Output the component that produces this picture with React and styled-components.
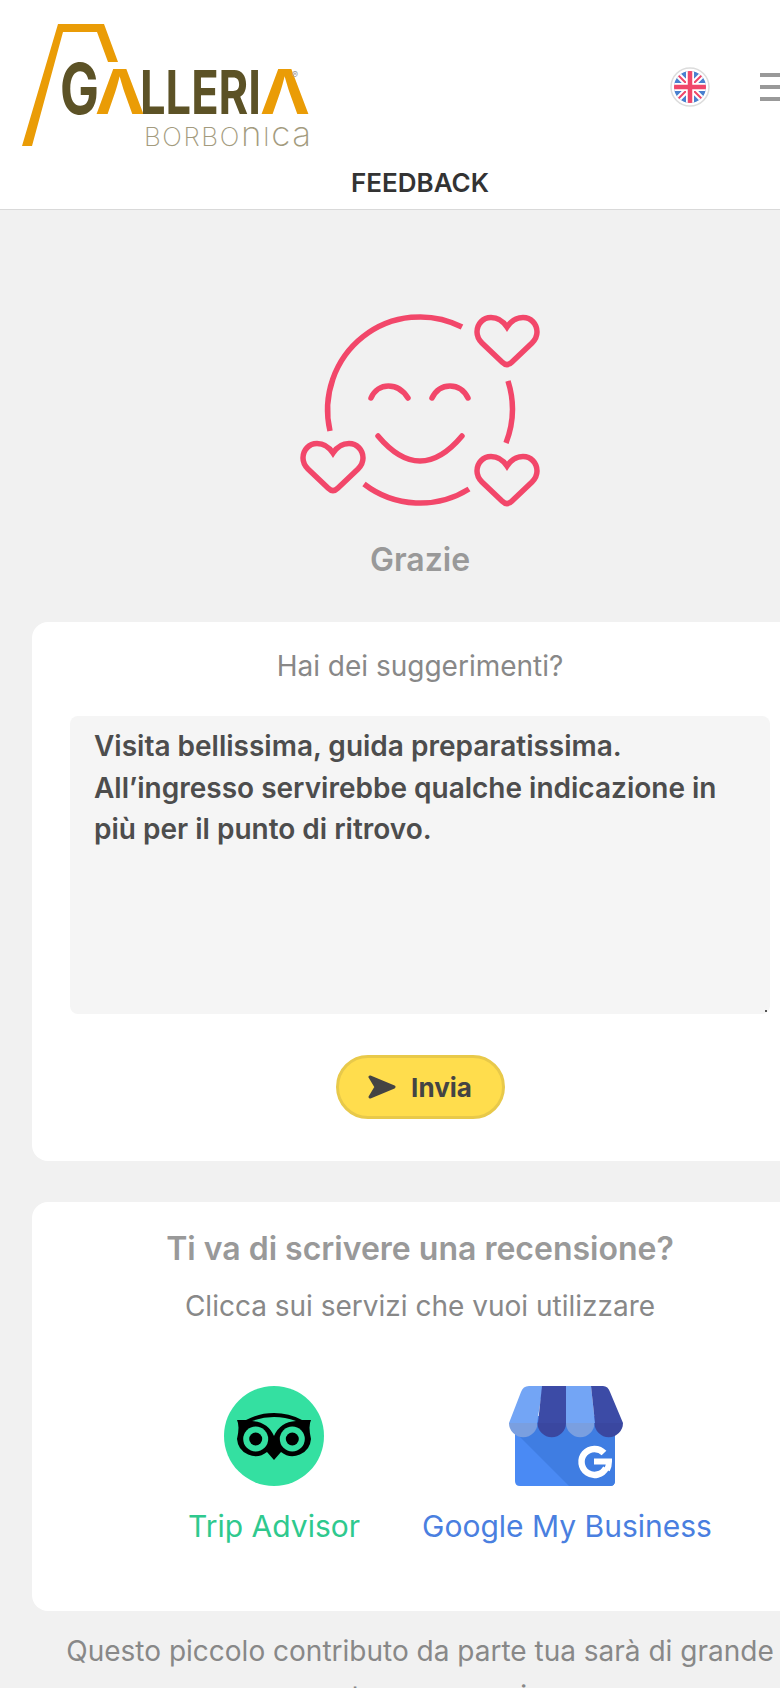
import React from 'react';
import styled, { createGlobalStyle } from 'styled-components';

const GlobalStyle = createGlobalStyle`
	html, body {
		margin: 0;
		width: 780px;
		height: 1688px;
		overflow: hidden;
		background: #f1f1f1;
		font-family: Inter, 'Noto Sans', sans-serif;
	}
`;

const Page = styled.div`
	width: 840px;
	display: flex;
	flex-direction: column;
`;

const Header = styled.header`
	height: 210px;
	box-sizing: border-box;
	background: #fff;
	border-bottom: 1px solid #d9d9d9;
	display: flex;
	flex-direction: column;
`;

const TopRow = styled.div`
	display: flex;
	align-items: center;
	justify-content: space-between;
	padding: 20px 40px 0 20px;
`;

const Actions = styled.div`
	display: flex;
	align-items: center;
	gap: 50px;
	margin-bottom: 16px;
`;

const Burger = styled.div`
	width: 40px;
	display: flex;
	flex-direction: column;
	gap: 8px;

	span {
		height: 4px;
		background: #999;
	}
`;

const PageTitle = styled.h1`
	margin: -2px 0 0;
	text-align: center;
	font-size: 26px;
	line-height: 30px;
	font-weight: 600;
	color: #333;
`;

const Main = styled.main`
	display: flex;
	flex-direction: column;
	padding: 0 32px;
`;

const Hero = styled.section`
	display: flex;
	flex-direction: column;
	align-items: center;
	padding-top: 80px;
	height: 412px;
	box-sizing: border-box;
`;

const HeroText = styled.div`
	font-size: 32px;
	line-height: 36px;
	font-weight: 600;
	color: #999;
	margin-top: 26px;
`;

const Card = styled.section`
	background: #fff;
	border-radius: 16px;
	display: flex;
	flex-direction: column;
	align-items: center;
	height: ${({ h }) => h}px;
	box-sizing: border-box;
	padding-top: ${({ top }) => top}px;

	& + & {
		margin-top: 41px;
	}
`;

const Question = styled.div`
	font-size: 28px;
	line-height: 36px;
	color: #888;
`;

const Heading = styled.h2`
	margin: 0 0 21px;
	font-size: 32px;
	line-height: 36px;
	font-weight: 600;
	color: #999;
`;

const NoteBox = styled.div`
	position: relative;
	align-self: flex-start;
	margin: 32px 0 0 38px;

	&::after {
		content: '';
		position: absolute;
		right: 3px;
		bottom: 2px;
		width: 2px;
		height: 2px;
		background: #555;
	}
`;

const Note = styled.textarea`
	display: block;
	width: 700px;
	height: 298px;
	box-sizing: border-box;
	padding: 10px 24px;
	border: 0;
	outline: 0;
	resize: none;
	border-radius: 8px;
	background: #f5f5f5;
	color: #4d4d4d;
	font: 600 28px/41.5px Inter, sans-serif;
`;

const SendButton = styled.button`
	margin-top: 41px;
	width: 169px;
	height: 64px;
	box-sizing: border-box;
	border: 3px solid #e8c94a;
	border-radius: 32px;
	background: #ffdd4d;
	color: #444;
	display: flex;
	align-items: center;
	justify-content: center;
	gap: 15px;
	font: 700 26px Inter, sans-serif;
`;

const Services = styled.div`
	display: flex;
	justify-content: center;
	gap: 62px;
	margin: 62px 0 0 60px;
`;

const Service = styled.a`
	display: flex;
	flex-direction: column;
	align-items: center;
	gap: 22px;
	font-size: 30px;
	line-height: 36px;
	color: ${({ color }) => color};
`;

const Closing = styled.p`
	margin: 18px 0 0;
	text-align: center;
	font-size: 28px;
	line-height: 45px;
	color: #888;
`;

const LogoName = styled.text`
	font-family: Inter, sans-serif;
	font-weight: 700;
`;

const LogoPlace = styled.text`
	font-family: Inter, sans-serif;
	font-weight: 250;
	letter-spacing: 1.6px;
	fill: #a39b7e;
`;

const Logo = () => (
	<svg width="330" height="150" viewBox="20 20 330 150">
		<path d="M22 146 L58 24 H104 L118 62 H108 L97 32 H63 L32 146Z" fill="#ea9c06" />
		<LogoName>
			<tspan x="60" y="114" fontSize="70" fill="#5c5226" textLength="39" lengthAdjust="spacingAndGlyphs">G</tspan>
			<tspan x="95" y="114" fontSize="62" fill="#ea9c06" textLength="50" lengthAdjust="spacingAndGlyphs">Λ</tspan>
			<tspan x="140" y="114" fontSize="60" fill="#5c5226" textLength="121" lengthAdjust="spacingAndGlyphs">LLERI</tspan>
			<tspan x="260" y="114" fontSize="62" fill="#ea9c06" textLength="50" lengthAdjust="spacingAndGlyphs">Λ</tspan>
			<tspan x="292" y="78" fontSize="9" fill="#999" fontWeight="400">®</tspan>
		</LogoName>
		<LogoPlace x="144" y="146" fontSize="26">
			BORBO<tspan fontSize="35">n</tspan>I<tspan fontSize="35">ca</tspan>
		</LogoPlace>
	</svg>
);

const Flag = () => (
	<svg width="40" height="40" viewBox="0 0 40 40">
		<defs>
			<clipPath id="flagClip">
				<circle cx="20" cy="20" r="16" />
			</clipPath>
		</defs>
		<circle cx="20" cy="20" r="19" fill="#fff" stroke="#dcdcdc" strokeWidth="1.5" />
		<g clipPath="url(#flagClip)">
			<rect width="40" height="40" fill="#4a80cf" />
			<path d="M4 4 L36 36 M36 4 L4 36" stroke="#fff" strokeWidth="6" />
			<path d="M4 4 L36 36 M36 4 L4 36" stroke="#f0476a" strokeWidth="2" />
			<path d="M20 0 V40 M0 20 H40" stroke="#fff" strokeWidth="8" />
			<path d="M20 0 V40 M0 20 H40" stroke="#f0476a" strokeWidth="4.5" />
		</g>
	</svg>
);

const heart = 'M0 12 C-4 6 -10 2.5 -16 2.5 C-24 2.5 -30 9 -30 17 C-30 22 -27 26 -25 28 L-5 47 Q0 52 5 47 L25 28 C27 26 30 22 30 17 C30 9 24 2.5 16 2.5 C10 2.5 4 6 0 12Z';

const Smiley = () => (
	<svg width="280" height="226" viewBox="0 0 280 226" fill="none" stroke="#f2476a" strokeWidth="5.5">
		<path d="M50 141 A92.5 93 0 0 1 182 37" />
		<path d="M228 91 A92.5 93 0 0 1 226 153" />
		<path d="M189 199 A92.5 93 0 0 1 84 194" />
		<g strokeLinecap="round">
			<path d="M91 108 C98 92 118 92 128 108" />
			<path d="M152 108 C160 92 180 92 188 108" />
			<path d="M98 146 Q140 196 182 146" />
		</g>
		<path d={heart} transform="translate(227 25)" />
		<path d={heart} transform="translate(53 151)" />
		<path d={heart} transform="translate(227 164)" />
	</svg>
);

const SendIcon = () => (
	<svg width="28" height="24" viewBox="0 0 28 24">
		<path d="M2 2 L26 12 L2 22 L8 12Z" fill="#444" stroke="#444" strokeWidth="3" strokeLinejoin="round" />
	</svg>
);

const TripAdvisorIcon = () => (
	<svg width="100" height="100" viewBox="0 0 100 100">
		<circle cx="50" cy="50" r="50" fill="#34e0a1" />
		<path d="M13 34 H22 Q35 27 50 27 Q65 27 78 34 H87 Q84 40 87 53 A18.5 18.5 0 0 1 57 66 L50 74 L43 66 A18.5 18.5 0 0 1 13 53 Q16 40 13 34Z" fill="#000" />
		<path d="M28 35 Q50 27 72 35 Q56 36 50 50 Q44 36 28 35Z" fill="#34e0a1" />
		<circle cx="31.7" cy="53" r="12.5" fill="#34e0a1" />
		<circle cx="68.3" cy="53" r="12.5" fill="#34e0a1" />
		<circle cx="31.7" cy="53" r="6.5" fill="#000" />
		<circle cx="68.3" cy="53" r="6.5" fill="#000" />
	</svg>
);

const BusinessIcon = () => (
	<svg width="115" height="100" viewBox="0 0 115 100">
		<path d="M6 30 H106 V95 Q106 100 101 100 H11 Q6 100 6 95Z" fill="#4a8af4" />
		<path d="M6 46 L60 100 H101 Q106 100 106 95 V36 H6Z" fill="#3f7de2" />
		<path d="M12 6 Q14 0 20 0 H34 L28 37 H0Z" fill="#73a5f5" />
		<path d="M33 0 H57 V37 H29Z" fill="#3c4ba6" />
		<path d="M57 0 H82 L86 37 H57Z" fill="#73a5f5" />
		<path d="M82 0 H94 Q99 0 101 6 L114 37 H86Z" fill="#3c4ba6" />
		<path d="M0 37 H28.5 A14.2 14.2 0 0 1 0 37Z" fill="#7a9fe0" />
		<path d="M28.5 37 H57 A14.2 14.2 0 0 1 28.5 37Z" fill="#3a47a0" />
		<path d="M57 37 H85.5 A14.2 14.2 0 0 1 57 37Z" fill="#7a9fe0" />
		<path d="M85.5 37 H114 A14.2 14.2 0 0 1 85.5 37Z" fill="#3a47a0" />
		<path d="M95 67 A13 13 0 1 0 97 82" fill="none" stroke="#fff" strokeWidth="6.5" />
		<path d="M85 75.5 H100 Q100 80 98 84" fill="none" stroke="#fff" strokeWidth="6" />
	</svg>
);

const App = () => (
	<Page>
		<GlobalStyle />
		<Header>
			<TopRow>
				<Logo />
				<Actions>
					<Flag />
					<Burger>
						<span />
						<span />
						<span />
					</Burger>
				</Actions>
			</TopRow>
			<PageTitle>FEEDBACK</PageTitle>
		</Header>
		<Main>
			<Hero>
				<Smiley />
				<HeroText>Grazie</HeroText>
			</Hero>
			<Card h={539} top={26}>
				<Question>Hai dei suggerimenti?</Question>
				<NoteBox>
					<Note defaultValue={'Visita bellissima, guida preparatissima.\nAll’ingresso servirebbe qualche indicazione in\npiù per il punto di ritrovo.'} />
				</NoteBox>
				<SendButton>
					<SendIcon />
					Invia
				</SendButton>
			</Card>
			<Card h={409} top={29}>
				<Heading>Ti va di scrivere una recensione?</Heading>
				<Question>Clicca sui servizi che vuoi utilizzare</Question>
				<Services>
					<Service color="#2fc98e">
						<TripAdvisorIcon />
						Trip Advisor
					</Service>
					<Service color="#4a7fe0">
						<BusinessIcon />
						Google My Business
					</Service>
				</Services>
			</Card>
			<Closing>Questo piccolo contributo da parte tua sarà di grande sostegno per noi.</Closing>
		</Main>
	</Page>
);

export default App;
